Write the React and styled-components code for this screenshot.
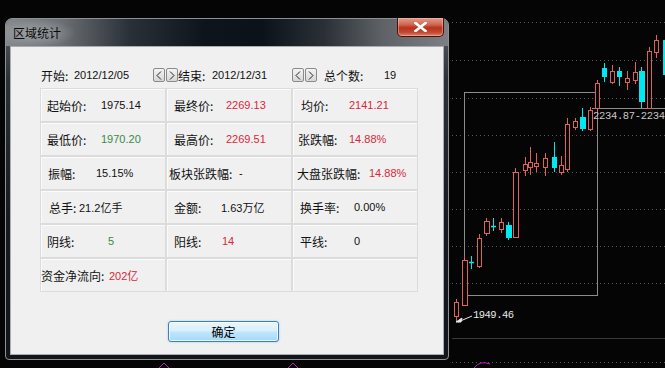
import React from "react";
import styled, { createGlobalStyle } from "styled-components";

const Global = createGlobalStyle`
  html, body { margin: 0; padding: 0; background: #000; }
  body { font-family: "Noto Sans CJK SC", "Liberation Sans", sans-serif; }
`;

const Screen = styled.div`
  position: relative;
  width: 665px;
  height: 368px;
  overflow: hidden;
  background: #050505;
`;

const ChartSvg = styled.svg`
  position: absolute;
  left: 0;
  top: 0;
`;

const Dialog = styled.div`
  position: absolute;
  left: 5px;
  top: 18px;
  width: 444px;
  height: 342px;
  box-sizing: border-box;
  border: 1px solid #8d9196;
  border-radius: 7px 7px 4px 4px;
  background: linear-gradient(to bottom, #5f6368 0px, #2c3136 60px, #171b20 200px, #12161a 100%);
  padding: 0 4px 4px;
  display: flex;
  flex-direction: column;
`;

const TitleBar = styled.div`
  height: 27px;
  margin: 0 -4px;
  padding: 0 4px 0 7px;
  display: flex;
  align-items: flex-start;
  justify-content: space-between;
  border-radius: 6px 6px 0 0;
  background:
    radial-gradient(ellipse 40px 14px at 30px 14px, rgba(190,192,194,0.55), rgba(190,192,194,0) 100%),
    linear-gradient(to right, #85898d 0%, #6e7276 12%, #2a3038 28%, #0e141c 45%, #0c121a 58%, #2a3036 72%, #5e6266 85%, #7c8084 100%);
`;

const TitleText = styled.span`
  font-family: "Noto Sans CJK SC", sans-serif;
  font-size: 12px;
  line-height: 27px;
  color: #0a0a0a;
`;

const CloseBtn = styled.div`
  width: 47px;
  height: 19px;
  margin-top: -1px;
  box-sizing: border-box;
  border: 1px solid #4a1208;
  border-top: none;
  border-radius: 0 0 5px 5px;
  background: linear-gradient(to bottom, #e39c8c 0%, #d06a55 35%, #b8321c 55%, #c24a30 80%, #e0806a 100%);
  box-shadow: inset 0 0 0 1px rgba(255, 200, 180, 0.45);
  display: flex;
  align-items: center;
  justify-content: center;
`;

const Client = styled.div`
  flex: 1;
  box-sizing: border-box;
  border: 1px solid #a9adb1;
  background: #f0f0f0;
  display: flex;
  flex-direction: column;
`;

const HeaderRow = styled.div`
  height: 16px;
  margin-top: 20px;
  padding-left: 30px;
  display: flex;
  align-items: center;
`;

const Field = styled.div`
  width: ${(p) => p.$w}px;
  flex: none;
  display: flex;
  align-items: center;
  white-space: nowrap;
`;

const Label = styled.span`
  font-family: "Noto Sans CJK SC", sans-serif;
  font-size: 12px;
  color: #111;
  width: ${(p) => (p.$w ? `${p.$w}px` : "auto")};
  flex: none;
  white-space: nowrap;
`;

const Value = styled.span`
  font-family: "Liberation Sans", "Noto Sans CJK SC", sans-serif;
  font-size: 11px;
  color: ${(p) => p.$c || "#111"};
  white-space: nowrap;
`;

const ArrowPair = styled.div`
  display: flex;
  gap: 1px;
  flex: none;
  margin-right: ${(p) => p.$mr || 0}px;
`;

const ArrowBtn = styled.div`
  width: 12px;
  height: 14px;
  box-sizing: border-box;
  border: 1px solid #8a8a8a;
  border-radius: 2px;
  background: linear-gradient(to bottom, #f4f4f4, #d6d6d6);
  display: flex;
  align-items: center;
  justify-content: center;
`;

const Grid = styled.div`
  margin: 5px 0 0 29px;
  width: 378px;
  display: grid;
  grid-template-columns: repeat(3, 126px);
  grid-auto-rows: 34px;
`;

const Cell = styled.div`
  box-sizing: border-box;
  border: 1px solid #dcdcdc;
  box-shadow: inset 1px 1px 0 #fbfbfb;
  padding-left: ${(p) => p.$pad}px;
  display: flex;
  align-items: center;
  white-space: nowrap;
  overflow: hidden;
`;

const Footer = styled.div`
  margin: 29px 0 0 157px;
`;

const OkButton = styled.div`
  width: 111px;
  height: 21px;
  box-sizing: border-box;
  border: 1px solid #3a82b8;
  border-radius: 3px;
  background: linear-gradient(to bottom, #eaf6fd 0%, #d9f0fc 45%, #bee6fd 55%, #a7d9f5 100%);
  box-shadow: inset 0 0 0 1px rgba(255,255,255,0.7), 0 0 2px rgba(80,170,230,0.6);
  display: flex;
  align-items: center;
  justify-content: center;
  font-family: "Noto Sans CJK SC", sans-serif;
  font-size: 12px;
  color: #000;
`;

const RED = "#d8283a";
const GREEN = "#3a8a46";

const cells = [
  { l: "起始价:", v: "1975.14", pad: 6, vx: 60 },
  { l: "最终价:", v: "2269.13", c: RED, pad: 7, vx: 59 },
  { l: "均价:", v: "2141.21", c: RED, pad: 8, vx: 56 },
  { l: "最低价:", v: "1970.20", c: GREEN, pad: 6, vx: 60 },
  { l: "最高价:", v: "2269.51", c: RED, pad: 7, vx: 59 },
  { l: "张跌幅:", v: "14.88%", c: RED, pad: 5, vx: 56 },
  { l: "振幅:", v: "15.15%", pad: 7, vx: 55 },
  { l: "板块张跌幅:", v: "-", pad: 2, vx: 72 },
  { l: "大盘张跌幅:", v: "14.88%", c: RED, pad: 4, vx: 76 },
  { l: "总手:", v: "21.2亿手", pad: 8, vx: 38 },
  { l: "金额:", v: "1.63万亿", pad: 7, vx: 54 },
  { l: "换手率:", v: "0.00%", pad: 7, vx: 61 },
  { l: "阴线:", v: "5", c: GREEN, pad: 6, vx: 67 },
  { l: "阳线:", v: "14", c: RED, pad: 7, vx: 55 },
  { l: "平线:", v: "0", pad: 7, vx: 61 },
  { l: "资金净流向:", v: "202亿", c: RED, pad: 0, vx: 68 },
  { l: "", v: "", pad: 0, vx: 0 },
  { l: "", v: "", pad: 0, vx: 0 },
];

// [x, w, bodyTop, bodyBottom, wickTop, wickBottom, type]
const candles = [
  [454, 4, 302, 316, 299, 321, "r"],
  [462, 5, 260, 305, 256, 306, "r"],
  [469, 4, 262, 263, 256, 269, "x"],
  [477, 4, 238, 266, 234, 268, "r"],
  [484, 5, 221, 233, 218, 236, "r"],
  [491, 4, 226, 227, 218, 231, "x"],
  [499, 4, 222, 229, 218, 233, "r"],
  [506, 5, 225, 238, 222, 240, "c"],
  [513, 5, 172, 237, 168, 238, "r"],
  [523, 4, 164, 170, 157, 176, "r"],
  [528, 4, 162, 167, 147, 175, "r"],
  [534, 4, 163, 166, 153, 172, "r"],
  [543, 4, 158, 167, 153, 176, "r"],
  [552, 4, 157, 168, 142, 172, "c"],
  [559, 4, 165, 172, 156, 175, "r"],
  [565, 4, 124, 169, 118, 172, "r"],
  [573, 4, 121, 127, 118, 130, "r"],
  [580, 5, 117, 129, 108, 131, "c"],
  [588, 4, 110, 129, 107, 131, "r"],
  [595, 4, 83, 108, 80, 110, "r"],
  [602, 4, 68, 77, 63, 82, "c"],
  [610, 4, 71, 82, 65, 84, "r"],
  [617, 4, 71, 77, 67, 86, "c"],
  [625, 4, 78, 82, 71, 90, "r"],
  [633, 4, 72, 80, 62, 84, "r"],
  [639, 5, 71, 102, 67, 108, "c"],
  [647, 4, 51, 108, 47, 108, "r"],
  [654, 4, 40, 52, 35, 58, "r"],
  [663, 5, 40, 75, 35, 80, "c"],
];

const gridYs = [22, 60, 98, 135, 172, 209, 246, 283, 362];

function Chart() {
  return (
    <ChartSvg width="665" height="368" viewBox="0 0 665 368">
      {gridYs.map((y) => (
        <line key={y} x1="452" y1={y + 0.5} x2="665" y2={y + 0.5} stroke="#5a5a5a" strokeDasharray="1 3" />
      ))}
      <line x1="452" y1="338.5" x2="665" y2="338.5" stroke="#3a3a3a" />
      <rect x="464.5" y="92.5" width="133" height="203" fill="none" stroke="#8c8c8c" />
      <line x1="592" y1="108.5" x2="665" y2="108.5" stroke="#8c8c8c" />
      {candles.map(([x, w, bt, bb, wt, wb, t], i) => {
        const cx = x + Math.floor(w / 2) + 0.5;
        if (t === "r") {
          return (
            <g key={i} stroke="#e0605c" fill="#050505">
              <line x1={cx} y1={wt} x2={cx} y2={bt} />
              <line x1={cx} y1={bb} x2={cx} y2={wb} />
              <rect x={x + 0.5} y={bt + 0.5} width={w} height={Math.max(bb - bt, 1)} />
            </g>
          );
        }
        if (t === "x") {
          return (
            <g key={i} stroke="#00e8f0">
              <line x1={cx} y1={wt} x2={cx} y2={wb} />
              <line x1={x} y1={bt + 0.5} x2={x + w + 1} y2={bt + 0.5} strokeWidth="1.5" />
            </g>
          );
        }
        return (
          <g key={i}>
            <line x1={cx} y1={wt} x2={cx} y2={wb} stroke="#00e8f0" />
            <rect x={x} y={bt} width={w + 1} height={bb - bt} fill="#00e8f0" />
          </g>
        );
      })}
      <text x="593" y="119" fontFamily="Liberation Mono, monospace" fontSize="10.5" fill="#c8c8c8" textLength="72">2234.87-2234</text>
      <text x="473" y="318" fontFamily="Liberation Mono, monospace" fontSize="10.5" fill="#e8e8e8" textLength="41">1949.46</text>
      <g stroke="#e8e8e8" fill="#e8e8e8">
        <line x1="472" y1="316" x2="458" y2="322" />
        <path d="M456 322 L462 318 L461 322 Z" />
      </g>
      <g stroke="#c020c0" fill="none">
        <path d="M159 368 L164 363 L169 368" />
        <path d="M288 368 L293 363 L298 368" />
        <path d="M474 368 Q480 360 490 364" />
      </g>
    </ChartSvg>
  );
}

function Chevron({ dir }) {
  return (
    <svg width="6" height="9" viewBox="0 0 6 9">
      {dir === "l" ? (
        <path d="M5 0.5 L1 4.5 L5 8.5" stroke="#222" fill="none" strokeWidth="1" />
      ) : (
        <path d="M1 0.5 L5 4.5 L1 8.5" stroke="#222" fill="none" strokeWidth="1" />
      )}
    </svg>
  );
}

function Arrows({ mr }) {
  return (
    <ArrowPair $mr={mr}>
      <ArrowBtn>
        <Chevron dir="l" />
      </ArrowBtn>
      <ArrowBtn>
        <Chevron dir="r" />
      </ArrowBtn>
    </ArrowPair>
  );
}

export default function App() {
  return (
    <>
      <Global />
      <Screen>
        <Chart />
        <Dialog>
          <TitleBar>
            <TitleText>区域统计</TitleText>
            <CloseBtn>
              <svg width="13" height="10" viewBox="0 0 13 10">
                <path d="M1.5 1 L11.5 9 M11.5 1 L1.5 9" stroke="#fff" strokeWidth="2.6" strokeLinecap="square" />
              </svg>
            </CloseBtn>
          </TitleBar>
          <Client>
            <HeaderRow>
              <Field $w={112}>
                <Label $w={33}>开始:</Label>
                <Value>2012/12/05</Value>
              </Field>
              <Arrows />
              <Field $w={114}>
                <Label $w={34}>结束:</Label>
                <Value>2012/12/31</Value>
              </Field>
              <Arrows mr={7} />
              <Field $w={120}>
                <Label $w={60}>总个数:</Label>
                <Value>19</Value>
              </Field>
            </HeaderRow>
            <Grid>
              {cells.map((c, i) => (
                <Cell key={i} $pad={c.pad}>
                  {c.l && <Label $w={c.vx - c.pad}>{c.l}</Label>}
                  {c.v && <Value $c={c.c}>{c.v}</Value>}
                </Cell>
              ))}
            </Grid>
            <Footer>
              <OkButton>确定</OkButton>
            </Footer>
          </Client>
        </Dialog>
      </Screen>
    </>
  );
}
